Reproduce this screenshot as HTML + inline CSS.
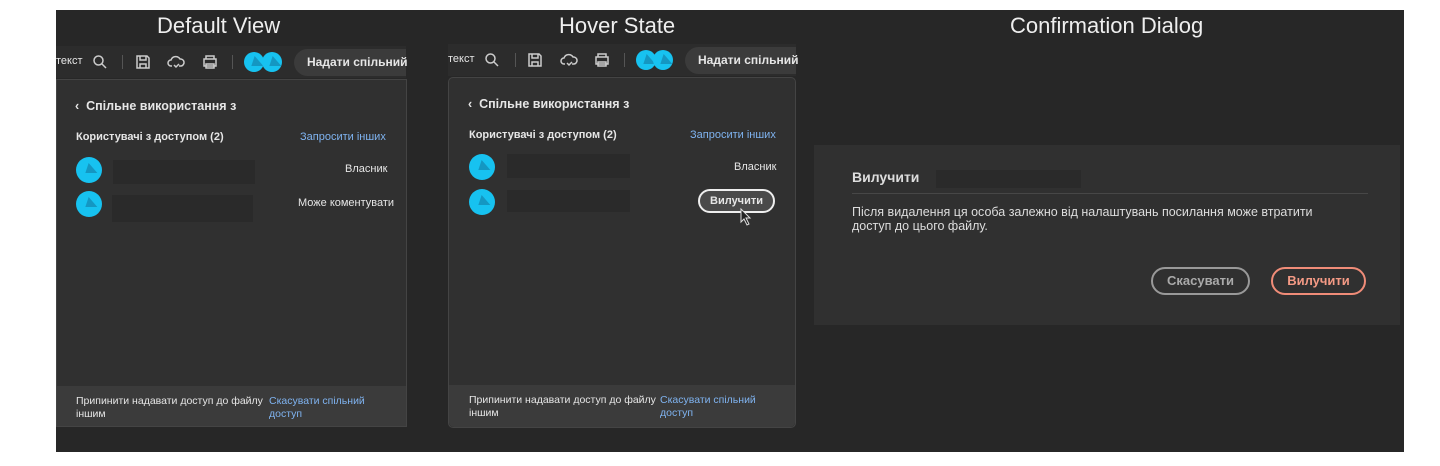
<!DOCTYPE html>
<html><head><meta charset="utf-8"><style>
*{margin:0;padding:0;box-sizing:border-box}
body{width:1440px;height:466px;background:#fff;position:relative;overflow:hidden;font-family:"Liberation Sans","DejaVu Sans",sans-serif;color:#e6e6e6}
.a{position:absolute}
.bg{left:56px;top:10px;width:1348px;height:442px;background:#272727}
.h{font-size:22px;color:#eee;top:13px}
.tb{height:32px;background:#2c2c2c}
.t{font-size:12px;white-space:nowrap}
.b{font-weight:bold}
.panel{background:#303030;border:1px solid #444}
.foot{background:#3b3b3b}
.av{width:26px;height:26px;border-radius:50%;background:#17c2f0;overflow:hidden}
.av:after{content:"";position:absolute;left:30%;top:22%;width:0;height:0;border-left:6px solid transparent;border-right:6px solid transparent;border-bottom:10px solid #1497c2;transform:skewX(15deg)}
.blk{background:#2a2a2a}
.link{color:#7fb3f0}
.pill{background:#3b3b3b;border-radius:16px 0 0 16px}
.icon{stroke:#ccc;fill:none;stroke-width:1.5}
</style></head><body>
<div class="a bg"></div>
<div class="a h" style="left:157px">Default View</div>
<div class="a h" style="left:559px">Hover State</div>
<div class="a h" style="left:1010px">Confirmation Dialog</div>

<!-- default toolbar -->
<div class="a tb" style="left:56px;top:46px;width:350px"></div>
<div class="a t" style="left:56px;top:55px;font-size:11px">текст</div>
<svg class="a" style="left:92px;top:54px" width="16" height="16"><circle class="icon" cx="6.5" cy="6.5" r="4.5"/><path class="icon" d="M10 10l4 4"/></svg>
<div class="a" style="left:122px;top:55px;width:1px;height:14px;background:#555"></div>
<svg class="a" style="left:135px;top:54px" width="16" height="16"><path class="icon" d="M2 2h10l2 2v10H2z M5 2v4h6V2 M5 14v-4h6v4"/></svg>
<svg class="a" style="left:167px;top:54px" width="18" height="16"><path class="icon" d="M5 12H4a3 3 0 010-6 5 5 0 019-1 3.5 3.5 0 011 7h-2M7 11l2 2 3-3"/></svg>
<svg class="a" style="left:201px;top:54px" width="18" height="16"><path class="icon" d="M5 5V2h8v3M3 5h12v7H3zM5 10h8v4H5z"/></svg>
<div class="a" style="left:232px;top:55px;width:1px;height:14px;background:#555"></div>
<div class="a av" style="left:244px;top:52px;width:20px;height:20px"></div>
<div class="a av" style="left:262px;top:52px;width:20px;height:20px"></div>
<div class="a pill" style="left:294px;top:49px;width:112px;height:27px"></div>
<div class="a t b" style="left:307px;top:55px">Надати спільний</div>

<div class="a panel" style="left:56px;top:79px;width:351px;height:348px"></div>
<div class="a foot" style="left:57px;top:386px;width:349px;height:40px"></div>
<div class="a t b" style="left:75px;top:99px;font-size:12.5px">‹&nbsp; Спільне використання з</div>
<div class="a t b" style="left:76px;top:131px;font-size:11px">Користувачі з доступом (2)</div>
<div class="a t link" style="left:300px;top:131px;font-size:11px">Запросити інших</div>
<div class="a av" style="left:76px;top:157px"></div>
<div class="a blk" style="left:113px;top:160px;width:142px;height:24px"></div>
<div class="a t" style="left:345px;top:163px;font-size:11px">Власник</div>
<div class="a av" style="left:76px;top:191px"></div>
<div class="a blk" style="left:112px;top:195px;width:141px;height:27px"></div>
<div class="a t" style="left:298px;top:197px;font-size:11px">Може коментувати</div>
<div class="a t" style="left:76px;top:395px;font-size:10.5px;line-height:13px">Припинити надавати доступ до файлу<br>іншим</div>
<div class="a t link" style="left:269px;top:395px;font-size:10.5px;line-height:13px">Скасувати спільний<br>доступ</div>

<!-- hover -->
<div class="a tb" style="left:448px;top:44px;width:348px"></div>
<div class="a t" style="left:448px;top:53px;font-size:11px">текст</div>
<svg class="a" style="left:484px;top:52px" width="16" height="16"><circle class="icon" cx="6.5" cy="6.5" r="4.5"/><path class="icon" d="M10 10l4 4"/></svg>
<div class="a" style="left:515px;top:53px;width:1px;height:14px;background:#555"></div>
<svg class="a" style="left:527px;top:52px" width="16" height="16"><path class="icon" d="M2 2h10l2 2v10H2z M5 2v4h6V2 M5 14v-4h6v4"/></svg>
<svg class="a" style="left:560px;top:52px" width="18" height="16"><path class="icon" d="M5 12H4a3 3 0 010-6 5 5 0 019-1 3.5 3.5 0 011 7h-2M7 11l2 2 3-3"/></svg>
<svg class="a" style="left:593px;top:52px" width="18" height="16"><path class="icon" d="M5 5V2h8v3M3 5h12v7H3zM5 10h8v4H5z"/></svg>
<div class="a" style="left:624px;top:53px;width:1px;height:14px;background:#555"></div>
<div class="a av" style="left:636px;top:50px;width:20px;height:20px"></div>
<div class="a av" style="left:653px;top:50px;width:20px;height:20px"></div>
<div class="a pill" style="left:685px;top:47px;width:111px;height:27px"></div>
<div class="a t b" style="left:698px;top:53px">Надати спільний</div>

<div class="a panel" style="left:448px;top:77px;width:348px;height:351px;border-radius:5px"></div>
<div class="a foot" style="left:449px;top:385px;width:346px;height:42px;border-radius:0 0 5px 5px"></div>
<div class="a t b" style="left:468px;top:97px;font-size:12.5px">‹&nbsp; Спільне використання з</div>
<div class="a t b" style="left:469px;top:129px;font-size:11px">Користувачі з доступом (2)</div>
<div class="a t link" style="left:690px;top:129px;font-size:11px">Запросити інших</div>
<div class="a av" style="left:469px;top:154px"></div>
<div class="a blk" style="left:507px;top:154px;width:123px;height:24px"></div>
<div class="a t" style="left:734px;top:161px;font-size:11px">Власник</div>
<div class="a av" style="left:469px;top:189px"></div>
<div class="a blk" style="left:507px;top:190px;width:123px;height:22px"></div>
<div class="a t b" style="left:698px;top:189px;width:77px;height:24px;border:2px solid #eee;border-radius:12px;background:#4a4a4a;font-size:11px;text-align:center;line-height:20px">Вилучити</div>
<svg class="a" style="left:740px;top:208px" width="12" height="18"><path d="M1 1v13l3-3 3 6 2-1-3-6h4z" fill="#222" stroke="#ddd" stroke-width="1"/></svg>
<div class="a t" style="left:469px;top:394px;font-size:10.5px;line-height:13px">Припинити надавати доступ до файлу<br>іншим</div>
<div class="a t link" style="left:660px;top:394px;font-size:10.5px;line-height:13px">Скасувати спільний<br>доступ</div>

<!-- dialog -->
<div class="a" style="left:814px;top:145px;width:586px;height:180px;background:#303030"></div>
<div class="a t b" style="left:852px;top:169px;font-size:14px;color:#ddd">Вилучити</div>
<div class="a blk" style="left:936px;top:170px;width:145px;height:18px"></div>
<div class="a" style="left:852px;top:193px;width:516px;height:1px;background:#474747"></div>
<div class="a t" style="left:852px;top:205px;font-size:12.5px;line-height:14px;color:#ddd">Після видалення ця особа залежно від налаштувань посилання може втратити<br>доступ до цього файлу.</div>
<div class="a t b" style="left:1151px;top:267px;width:99px;height:28px;border:2px solid #999;border-radius:14px;color:#aaa;font-size:13px;text-align:center;line-height:24px">Скасувати</div>
<div class="a t b" style="left:1271px;top:267px;width:95px;height:28px;border:2px solid #f08c78;border-radius:14px;color:#f49a85;font-size:13px;text-align:center;line-height:24px">Вилучити</div>
</body></html>
